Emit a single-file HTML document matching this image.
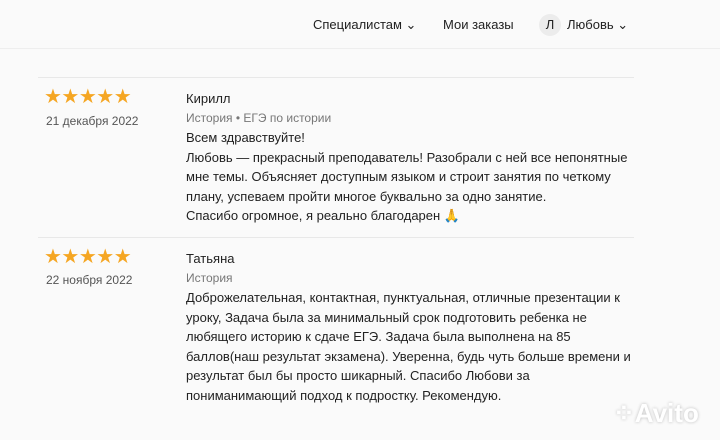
<!DOCTYPE html><html><head><meta charset="utf-8"><style>
body{margin:0;width:720px;height:440px;background:#fafafa;font-family:"Liberation Sans",sans-serif;color:#222;overflow:hidden;position:relative}
.hdr{height:48px;border-bottom:1px solid #eee;background:#fafafa;position:relative;font-size:13px}
.hdr span{position:absolute;top:17px}
.av{position:absolute;left:539px;top:14px;width:22px;height:22px;border-radius:50%;background:#ececec;text-align:center;line-height:22px;font-size:13px}
.sep{position:absolute;left:38px;right:86px;top:77px;border-top:1px solid #e8e8e8}
.stars{position:absolute;left:44px;color:#f5a623;font-size:20px;letter-spacing:-0.5px;line-height:20px}
.date{position:absolute;left:46px;font-size:12px;color:#555}
.name{position:absolute;left:186px;font-size:13px}
.sub{position:absolute;left:186px;font-size:12px;color:#777}
.txt{position:absolute;left:186px;width:450px;font-size:13px;line-height:19.6px}
.logo{position:absolute;left:613px;top:398px;color:#fff;font-size:26px;font-weight:bold;white-space:nowrap;text-shadow:0 0 3px #bbb}
</style></head><body>
<div class="hdr"><span style="left:313px">Специалистам ⌄</span><span style="left:443px">Мои заказы</span><div class="av">Л</div><span style="left:567px">Любовь ⌄</span></div>
<div class="sep"></div>
<div class="stars" style="top:87px">★★★★★</div>
<div class="date" style="top:114px">21 декабря 2022</div>
<div class="name" style="top:91px">Кирилл</div>
<div class="sub" style="top:111px">История • ЕГЭ по истории</div>
<div class="txt" style="top:128px">Всем здравствуйте!<br>Любовь — прекрасный преподаватель! Разобрали с ней все непонятные мне темы. Объясняет доступным языком и строит занятия по четкому плану, успеваем пройти многое буквально за одно занятие.<br>Спасибо огромное, я реально благодарен 🙏</div>
<div class="sep" style="top:237px"></div>
<div class="stars" style="top:247px">★★★★★</div>
<div class="date" style="top:273px">22 ноября 2022</div>
<div class="name" style="top:251px">Татьяна</div>
<div class="sub" style="top:271px">История</div>
<div class="txt" style="top:288px">Доброжелательная, контактная, пунктуальная, отличные презентации к уроку, Задача была за минимальный срок подготовить ребенка не любящего историю к сдаче ЕГЭ. Задача была выполнена на 85 баллов(наш результат экзамена). Уверенна, будь чуть больше времени и результат был бы просто шикарный. Спасибо Любови за пониманимающий подход к подростку. Рекомендую.</div>
<div class="logo">⁘Avito</div>
</body></html>
